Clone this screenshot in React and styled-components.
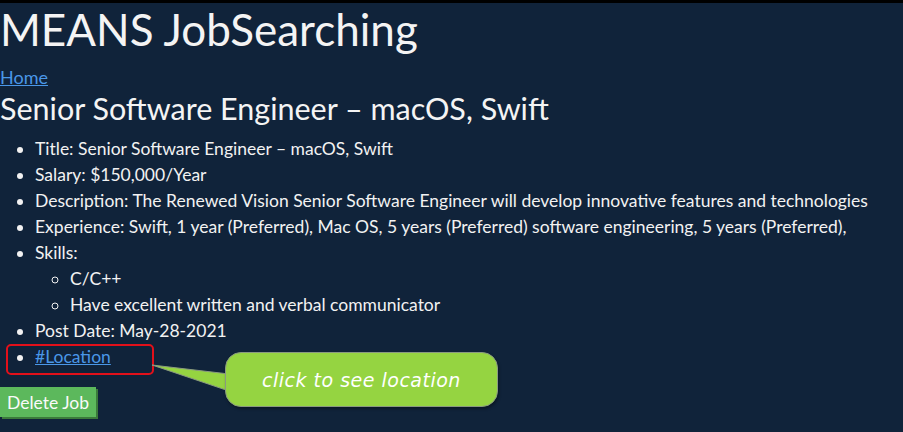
import styled, { createGlobalStyle } from 'styled-components';

const GlobalStyle = createGlobalStyle`
  html, body {
    margin: 0;
    padding: 0;
    background: #10233a;
  }
  body {
    font-family: Lato, "Open Sans", sans-serif;
    color: #f2f2f2;
    border-top: 3px solid #000;
    min-height: 429px;
  }
`;

const Page = styled.div`
  position: relative;
  display: flex;
  flex-direction: column;
  align-items: flex-start;
`;

const Title = styled.h1`
  margin: 0;
  font-size: 44px;
  font-weight: 400;
  line-height: 52px;
  color: #f4f4f4;
`;

const HomeLink = styled.a`
  margin-top: 11px;
  font-size: 18px;
  line-height: 22px;
  color: #4a97e8;
  text-decoration: underline;
`;

const JobHeading = styled.h2`
  margin: 1px 0 0;
  font-size: 30.5px;
  font-weight: 400;
  line-height: 38px;
  color: #f4f4f4;
`;

const List = styled.ul`
  margin: ${({ $nested }) => ($nested ? '0' : '9px 0 0')};
  padding-left: 35px;
  list-style-type: ${({ $nested }) => ($nested ? 'circle' : 'disc')};
  font-size: 17.5px;
  line-height: 26px;
`;

const Item = styled.li`
  white-space: nowrap;
`;

const LocationItem = styled.li`
  position: relative;
`;

const LocationLink = styled.a`
  color: #4a97e8;
  text-decoration: underline;
`;

const Highlight = styled.span`
  position: absolute;
  left: -29px;
  top: 0;
  width: 148px;
  height: 31px;
  border: 2px solid #e3101a;
  border-radius: 5px;
  box-sizing: border-box;
  pointer-events: none;
`;

const DeleteButton = styled.button`
  margin-top: 17px;
  padding: 0;
  width: 96px;
  height: 30px;
  border: none;
  background: #5cb85c;
  box-shadow: 2px 2px 0 #3b7a3b;
  color: #fafafa;
  font-family: Lato, sans-serif;
  font-size: 17.5px;
  cursor: pointer;
`;

const Callout = styled.div`
  position: absolute;
  left: 152px;
  top: 346px;
  width: 347px;
  height: 60px;
  pointer-events: none;
`;

const Bubble = styled.div`
  position: absolute;
  left: 73px;
  top: 3px;
  width: 273px;
  height: 55px;
  box-sizing: border-box;
  background: #95d441;
  border: 1px solid #8a9a80;
  border-radius: 16px;
  display: flex;
  align-items: center;
  justify-content: center;
  font-family: "DejaVu Sans", cursive;
  font-style: italic;
  font-weight: 300;
  font-size: 19px;
  letter-spacing: 0.5px;
  color: #ffffff;
  box-shadow: 1px 2px 3px rgba(0, 0, 0, 0.35);
`;

const Tail = styled.svg`
  position: absolute;
  left: 0;
  top: 0;
  overflow: visible;
`;

export default function App() {
  return (
    <>
      <GlobalStyle />
      <Page>
        <Title>MEANS JobSearching</Title>
        <HomeLink href="#">Home</HomeLink>
        <JobHeading>Senior Software Engineer – macOS, Swift</JobHeading>
        <List>
          <Item>Title: Senior Software Engineer – macOS, Swift</Item>
          <Item>Salary: $150,000/Year</Item>
          <Item>Description: The Renewed Vision Senior Software Engineer will develop innovative features and technologies</Item>
          <Item>Experience: Swift, 1 year (Preferred), Mac OS, 5 years (Preferred) software engineering, 5 years (Preferred),</Item>
          <Item>
            Skills:
            <List $nested>
              <Item>C/C++</Item>
              <Item>Have excellent written and verbal communicator</Item>
            </List>
          </Item>
          <Item>Post Date: May-28-2021</Item>
          <LocationItem>
            <LocationLink href="#">#Location</LocationLink>
            <Highlight />
          </LocationItem>
        </List>
        <DeleteButton>Delete Job</DeleteButton>
        <Callout>
          <Tail width="80" height="45">
            <polygon points="0,16 77,25 77,42" fill="#95d441" stroke="#8a9a80" strokeWidth="1" />
          </Tail>
          <Bubble>click to see location</Bubble>
        </Callout>
      </Page>
    </>
  );
}
